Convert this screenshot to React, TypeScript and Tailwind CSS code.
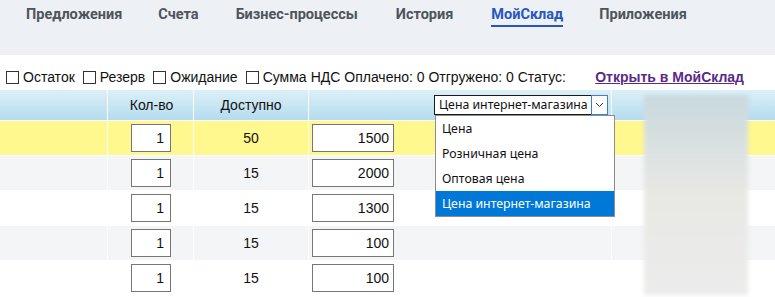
import React from "react";

const tabs = [
  { label: "Предложения", ml: "ml-[26px]" },
  { label: "Счета", ml: "ml-[36px]" },
  { label: "Бизнес-процессы", ml: "ml-[37px]" },
  { label: "История", ml: "ml-[38px]" },
  { label: "МойСклад", ml: "ml-[38px]" },
  { label: "Приложения", ml: "ml-[36px]" },
];

const rows = [
  { qty: "1", avail: "50", price: "1500", bg: "bg-[#fff88f]" },
  { qty: "1", avail: "15", price: "2000", bg: "bg-[#f4f5f7]" },
  { qty: "1", avail: "15", price: "1300", bg: "bg-white" },
  { qty: "1", avail: "15", price: "100", bg: "bg-[#f4f5f7]" },
  { qty: "1", avail: "15", price: "100", bg: "bg-white" },
];

const priceTypes = ["Цена", "Розничная цена", "Оптовая цена", "Цена интернет-магазина"];

function Check({ label, last }: { label: string; last?: boolean }) {
  return (
    <span className={"flex items-center " + (last ? "mr-[4px]" : "mr-[8px]")}>
      <span className="w-[13px] h-[13px] border border-[#333] bg-white mr-[4px]" />
      {label}
    </span>
  );
}

export default function App() {
  return (
    <div className="w-[775px] h-[297px] overflow-hidden bg-white relative font-['Liberation_Sans',Arial,sans-serif] text-[#111]">
      {/* Tabs */}
      <div className="h-[55px] bg-[#edf0f4] flex items-start font-['Roboto',sans-serif] font-bold text-[14.5px] text-[#4e545b]">
        {tabs.map((t) => (
          <div
            key={t.label}
            className={
              `${t.ml} pt-[4px] leading-[21px] ` +
              (t.label === "МойСклад" ? "text-[#2856bd] border-b-2 border-[#2856bd]" : "")
            }
          >
            {t.label}
          </div>
        ))}
      </div>

      {/* Filters */}
      <div className="h-[35px] flex items-center pl-[6px] pt-[10px] text-[14px] text-[#111]">
        <Check label="Остаток" />
        <Check label="Резерв" />
        <Check label="Ожидание" />
        <Check label="Сумма" last />
        <span>НДС Оплачено: 0 Отгружено: 0 Статус:</span>
        <a className="ml-auto mr-[31px] font-bold text-[#5a2a87] underline">Открыть в МойСклад</a>
      </div>

      {/* Table */}
      <div className="grid grid-cols-[108px_86px_115px_303px_1fr] text-[14px]">
        <div className="h-[30px] bg-gradient-to-b from-[#dcf0f8] to-[#b4dcee] border-r border-white" />
        <div className="h-[30px] bg-gradient-to-b from-[#dcf0f8] to-[#b4dcee] border-r border-white flex items-center justify-center pl-[2px]">Кол-во</div>
        <div className="h-[30px] bg-gradient-to-b from-[#dcf0f8] to-[#b4dcee] border-r border-white flex items-center justify-center">Доступно</div>
        <div className="h-[30px] bg-gradient-to-b from-[#dcf0f8] to-[#b4dcee] border-r border-white flex items-center pl-[125px]">
          <div className="h-[20px] w-[174px] flex bg-white border border-[#1a1a1a] font-['Noto_Sans',sans-serif] text-[12.3px]">
            <span className="flex-1 pl-[4px] leading-[18px] whitespace-nowrap">Цена интернет-магазина</span>
            <span className="w-[17px] border border-[#3a7fc9] -my-px -mr-px flex items-center justify-center">
              <svg width="9" height="6" viewBox="0 0 9 6">
                <path d="M1 1l3.5 3.5L8 1" fill="none" stroke="#333" strokeWidth="1" />
              </svg>
            </span>
          </div>
        </div>
        <div className="h-[30px] bg-gradient-to-b from-[#dcf0f8] to-[#b4dcee]" />

        {rows.map((r, i) => (
          <React.Fragment key={i}>
            <div className={`h-[35px] border-t border-r border-white ${r.bg}`} />
            <div className={`h-[35px] border-t border-r border-white ${r.bg} flex items-center pl-[23px]`}>
              <div className="w-[40px] h-[28px] border border-[#767676] bg-white text-right pr-[6px] leading-[26px]">{r.qty}</div>
            </div>
            <div className={`h-[35px] border-t border-r border-white ${r.bg} flex items-center justify-center`}>{r.avail}</div>
            <div className={`h-[35px] border-t border-r border-white ${r.bg} flex items-center pl-[3px]`}>
              <div className="w-[82px] h-[28px] border border-[#767676] bg-white text-right pr-[4px] leading-[26px]">{r.price}</div>
            </div>
            <div className={`h-[35px] border-t border-white ${r.bg}`} />
          </React.Fragment>
        ))}
      </div>

      {/* Blurred preview */}
      <div className="absolute left-[644px] top-[95px] w-[104px] h-[200px] bg-gradient-to-b from-[#c9d9de] via-[#e8e8e4] to-[#ececec] blur-[2px]" />

      {/* Opened select list */}
      <div className="absolute left-[435px] top-[115px] w-[180px] border border-[#8d8d8d] bg-white font-['Noto_Sans',sans-serif] text-[12.3px] text-[#111]">
        {priceTypes.map((p) => (
          <div
            key={p}
            className={
              "h-[25px] leading-[25px] pl-[6px] whitespace-nowrap " +
              (p === "Цена интернет-магазина" ? "bg-[#0078d7] text-white" : "")
            }
          >
            {p}
          </div>
        ))}
      </div>
    </div>
  );
}
